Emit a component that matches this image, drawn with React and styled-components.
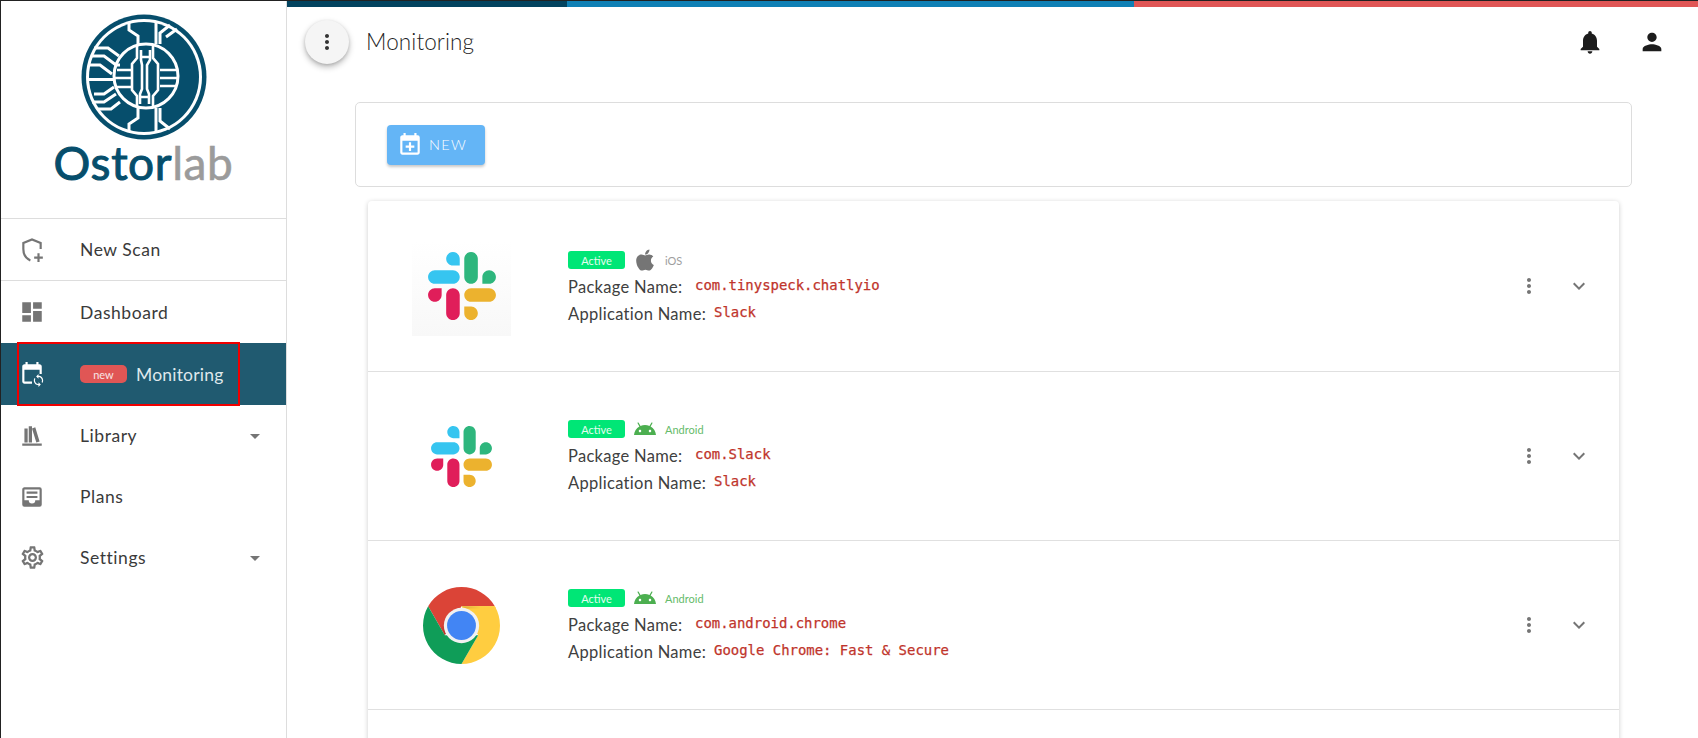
import React from "react";
import styled, { createGlobalStyle } from "styled-components";
import { FaApple } from "react-icons/fa";
import { MdOutlineSettings } from "react-icons/md";

const Global = createGlobalStyle`
  html, body { margin: 0; padding: 0; background: #fff; }
  body { font-family: "Lato", "Open Sans", sans-serif; color: #333; }
  * { box-sizing: border-box; }
`;

const Page = styled.div`
  display: flex;
  height: 738px;
  overflow: hidden;
  background: #fff;
  border-top: 1px solid #222;
`;

const Sidebar = styled.aside`
  flex: 0 0 287px;
  border-left: 1px solid #222;
  border-right: 1px solid #ddd;
  display: flex;
  flex-direction: column;
`;

const LogoBlock = styled.div`
  height: 218px;
  border-bottom: 1px solid #ddd;
  display: flex;
  flex-direction: column;
  align-items: center;
  padding-top: 13px;
`;

const LogoText = styled.div`
  font-family: "Lato", sans-serif;
  font-size: 46px;
  line-height: 40px;
  margin-top: 3px;
  font-weight: 400;
  color: #064e6c;
  letter-spacing: 0.6px;
  -webkit-text-stroke: 1px #064e6c;
  span { color: #9b9b9b; font-weight: 400; -webkit-text-stroke: 0.6px #9b9b9b; }
`;

const NavItem = styled.div`
  position: relative;
  height: ${(p) => p.$h}px;
  display: flex;
  align-items: center;
  padding-left: 19px;
  font-size: 17.5px;
  letter-spacing: ${(p) => (p.$active ? "0.2px" : "0.55px")};
  color: ${(p) => (p.$active ? "#dfe8ec" : "#3a3a3a")};
  background: ${(p) => (p.$active ? "#205a70" : "transparent")};
  border-bottom: ${(p) => (p.$line ? "1px solid #ddd" : "none")};
`;

const NavIcon = styled.svg`
  width: ${(p) => p.$s || 24}px;
  height: ${(p) => p.$s || 24}px;
  flex: none;
  margin-left: ${(p) => (p.$s ? (24 - p.$s) / 2 : 0)}px;
  margin-right: ${(p) => (p.$s ? 36 + (24 - p.$s) / 2 : 36)}px;
  fill: ${(p) => (p.$active ? "#fff" : "#757575")};
`;

const NewTag = styled.span`
  width: 47px;
  height: 18px;
  border-radius: 5px;
  background: #e05655;
  color: #f7e5e5;
  font-size: 11px;
  letter-spacing: 0;
  display: flex;
  align-items: center;
  justify-content: center;
  margin-right: 9px;
`;

const Highlight = styled.div`
  position: absolute;
  left: 16px;
  width: 223px;
  top: -1px;
  bottom: -1px;
  border: 2px solid #f00000;
  pointer-events: none;
`;

const Caret = styled.svg`
  width: 24px;
  height: 24px;
  fill: #757575;
  margin-left: auto;
  margin-right: 19px;
`;

const Main = styled.main`
  flex: 1;
  min-width: 0;
  display: flex;
  flex-direction: column;
`;

const Stripe = styled.div`
  display: flex;
  height: 6px;
  flex: 0 0 6px;
`;

const StripePart = styled.div`
  width: ${(p) => p.$w}px;
  flex: ${(p) => (p.$w ? "none" : "1")};
  background: ${(p) => p.$c};
`;

const Header = styled.header`
  flex: 0 0 70px;
  display: flex;
  align-items: center;
  padding: 0 0 0 18px;
`;

const Fab = styled.div`
  width: 44px;
  height: 44px;
  border-radius: 50%;
  background: #f5f5f5;
  display: flex;
  align-items: center;
  justify-content: center;
  box-shadow: 0 3px 6px rgba(0, 0, 0, 0.28), 0 1px 3px rgba(0, 0, 0, 0.12);
  margin-right: 17px;
`;

const Title = styled.h1`
  margin: 0;
  font-size: 22.5px;
  font-weight: 300;
  line-height: 28px;
  color: #1f1f1f;
  letter-spacing: 0.1px;
`;

const HeaderIcons = styled.div`
  margin-left: auto;
  display: flex;
  gap: 34px;
  padding-right: 32px;
`;

const Svg = styled.svg`
  width: ${(p) => p.$s || 24}px;
  height: ${(p) => p.$s || 24}px;
  fill: ${(p) => p.$c || "#757575"};
  flex: none;
  display: block;
`;

const Content = styled.div`
  flex: none;
  padding: 25px 66px 0 68px;
`;

const Toolbar = styled.section`
  height: 85px;
  border: 1px solid #ddd;
  border-radius: 5px;
  display: flex;
  align-items: center;
  padding: 0 0 0 31px;
`;

const NewButton = styled.button`
  width: 98px;
  height: 40px;
  border: 0;
  border-radius: 4px;
  background: #64b5f6;
  color: #fff;
  font-family: inherit;
  font-size: 14.5px;
  font-weight: 300;
  letter-spacing: 1.3px;
  display: flex;
  align-items: center;
  padding: 0 0 0 10px;
  gap: 6px;
  box-shadow: 0 2px 3px rgba(0, 0, 0, 0.22);
`;

const Card = styled.section`
  margin: 14px 13px 0 13px;
  border-radius: 4px;
  background: #fff;
  box-shadow: 0 1px 5px rgba(0, 0, 0, 0.2);
`;

const Row = styled.article`
  height: ${(p) => p.$h}px;
  display: flex;
  align-items: center;
  padding-right: 28px;
  border-bottom: 1px solid #e0e0e0;
`;

const LogoCell = styled.div`
  flex: 0 0 187px;
  margin-right: 13px;
  display: flex;
  align-items: center;
  justify-content: center;
  margin-top: ${(p) => p.$top || 0}px;
`;

const IconTile = styled.div`
  width: 99px;
  height: 95px;
  padding-bottom: 5px;
  display: flex;
  align-items: center;
  justify-content: center;
  background: linear-gradient(#ffffff, #f8f8f8);
`;

const Info = styled.div`
  flex: 1;
  align-self: flex-start;
  padding-top: ${(p) => p.$top}px;
  display: flex;
  flex-direction: column;
`;

const MetaLine = styled.div`
  height: 18px;
  display: flex;
  align-items: center;
  margin-bottom: 4px;
`;

const Active = styled.span`
  width: 57px;
  height: 18px;
  border-radius: 3px;
  background: #00e676;
  color: #e3fdf0;
  font-size: 11px;
  display: flex;
  align-items: center;
  justify-content: center;
  margin-right: 8px;
`;

const Platform = styled.span`
  font-size: 11px;
  margin-left: 8px;
  color: ${(p) => p.$c};
`;

const Field = styled.div`
  height: 27px;
  display: flex;
  align-items: center;
  font-size: 16.5px;
  font-weight: 400;
  color: #404040;
  letter-spacing: 0.3px;
`;

const FieldLabel = styled.span`
  flex: 0 0 ${(p) => p.$w}px;
  white-space: nowrap;
`;

const Code = styled.code`
  font-family: "DejaVu Sans Mono", "Liberation Mono", monospace;
  font-size: 13.95px;
  font-weight: 400;
  color: #c0342b;
  -webkit-text-stroke: 0.25px #c0342b;
  letter-spacing: 0;
  margin-bottom: 4px;
`;

const Actions = styled.div`
  display: flex;
  align-items: center;
  gap: 26px;
`;

const ic = {
  bell: "M12 22c1.1 0 2-.9 2-2h-4c0 1.1.89 2 2 2zm6-6v-5c0-3.07-1.64-5.64-4.5-6.32V4c0-.83-.67-1.5-1.5-1.5s-1.5.67-1.5 1.5v.68C7.63 5.36 6 7.92 6 11v5l-2 2v1h16v-1l-2-2z",
  person: "M12 12c2.21 0 4-1.79 4-4s-1.79-4-4-4-4 1.79-4 4 1.79 4 4 4zm0 2c-2.67 0-8 1.34-8 4v2h16v-2c0-2.66-5.33-4-8-4z",
  more: "M12 8c1.1 0 2-.9 2-2s-.9-2-2-2-2 .9-2 2 .9 2 2 2zm0 2c-1.1 0-2 .9-2 2s.9 2 2 2 2-.9 2-2-.9-2-2-2zm0 6c-1.1 0-2 .9-2 2s.9 2 2 2 2-.9 2-2-.9-2-2-2z",
  chevron: "M16.59 8.59L12 13.17 7.41 8.59 6 10l6 6 6-6z",
  dash: "M3 13h8V3H3v10zm0 8h8v-6H3v6zm10 0h8V11h-8v10zm0-18v6h8V3h-8z",
  caret: "M7 10l5 5 5-5z",
  shelf: "M9 3V18H12V3H9M12 5L16 18L19 17L15 4L12 5M5 5V18H8V5H5M3 19V21H21V19H3Z",
  inbox: "M19 15H15A3 3 0 0 1 12 18A3 3 0 0 1 9 15H5V5H19M19 3H5C3.89 3 3 3.9 3 5V19A2 2 0 0 0 5 21H19A2 2 0 0 0 21 19V5A2 2 0 0 0 19 3M17 7H7V9H17V7M17 11H7V13H17V11Z",
  calPlus: "M19 19V8H5V19H19M16 1H18V3H19A2 2 0 0 1 21 5V19C21 20.11 20.1 21 19 21H5C3.89 21 3 20.1 3 19V5C3 3.89 3.89 3 5 3H6V1H8V3H16V1M11 9.5H13V12.5H16V14.5H13V17.5H11V14.5H8V12.5H11V9.5Z",
  android: "M17.6 9.48l1.84-3.18c.16-.31.04-.69-.26-.85-.29-.15-.65-.06-.83.22l-1.88 3.24c-2.86-1.21-6.08-1.21-8.94 0L5.65 5.67c-.19-.29-.58-.38-.87-.2-.28.18-.37.54-.22.83L6.4 9.48C3.3 11.25 1.28 14.44 1 18h22c-.28-3.56-2.3-6.75-5.4-8.52zM7 15.25c-.69 0-1.25-.56-1.25-1.25s.56-1.25 1.25-1.25 1.25.56 1.25 1.25-.56 1.25-1.25 1.25zm10 0c-.69 0-1.25-.56-1.25-1.25s.56-1.25 1.25-1.25 1.25.56 1.25 1.25-.56 1.25-1.25 1.25z",
  sync: "M12 4V1L8 5l4 4V6c3.31 0 6 2.69 6 6 0 1.01-.25 1.97-.7 2.8l1.46 1.46C19.54 15.03 20 13.57 20 12c0-4.42-3.58-8-8-8zm0 14c-3.31 0-6-2.69-6-6 0-1.01.25-1.97.7-2.8L5.24 7.74C4.46 8.97 4 10.43 4 12c0 4.42 3.58 8 8 8v3l4-4-4-4v3z",
};

const Logo = () => (
  <svg width="126" height="126" viewBox="-63 -63 126 126" aria-hidden="true">
    <circle r="62.5" fill="#064e6c" />
    <circle r="58" fill="#fff" />
    <circle r="55" fill="#064e6c" />
    <g fill="none" stroke="#fff" strokeWidth="3" strokeLinejoin="miter">
      <circle cx="2" cy="-1" r="32" />
      <path d="M-7 -32V-19L-12 -13V13L-7 19V31M9 -32V-19L14 -13V13L9 19V31" strokeWidth="2.6" />
      <path d="M-3 -27V-17L-2 -12V12L-4 17V27M6 -27V-17L3 -12V12L5 17V27" strokeWidth="2.6" />
      <path d="M-3 -20H6M-4 20H5" strokeWidth="2.4" />
      <path d="M-27 -7H-13M-30 1H-13M-27 10H-13" strokeWidth="2.6" />
      <path d="M32 -7H16M34 1H16M32 9H16" strokeWidth="2.6" />
      <path d="M-56 2.5H-29" />
      <path d="M-52 -21H-40L-28 -12H-24M-50 -29H-36L-25 -21M-54 -12H-44L-32 -3" />
      <path d="M-50 17H-40L-30 10M-52 25H-40L-28 17M-46 32H-33L-24 25" />
      <path d="M12 -56V-33M-15 -54V-47L-6 -41V-33M26 -52L16 -44V-33M33 -48L22 -40" />
      <path d="M12 56V31M-15 54V47L-6 41V31M26 52L16 44V31" />
    </g>
  </svg>
);

const SlackLogo = ({ size }) => (
  <svg width={size} height={size} viewBox="0 0 2447.6 2452.5" aria-hidden="true">
    <path d="m897.4 0c-135.3.1-244.8 109.9-244.7 245.2-.1 135.3 109.5 245.1 244.8 245.2h244.8v-245.1c.1-135.3-109.5-245.1-244.9-245.3.1 0 .1 0 0 0m0 654h-652.6c-135.3.1-244.9 109.9-244.8 245.2-.2 135.3 109.4 245.1 244.7 245.3h652.7c135.3-.1 244.9-109.9 244.8-245.2.1-135.4-109.5-245.2-244.8-245.3z" fill="#36c5f0" />
    <path d="m2447.6 899.2c.1-135.3-109.5-245.1-244.8-245.2-135.3.1-244.9 109.9-244.8 245.2v245.3h244.8c135.3-.1 244.9-109.9 244.8-245.3zm-652.7 0v-654c.1-135.2-109.4-245-244.7-245.2-135.3.1-244.9 109.9-244.8 245.2v654c-.2 135.3 109.4 245.1 244.7 245.3 135.3-.1 244.9-109.9 244.8-245.3z" fill="#2eb67d" />
    <path d="m1550.1 2452.5c135.3-.1 244.9-109.9 244.8-245.2.1-135.3-109.5-245.1-244.8-245.2h-244.8v245.2c-.1 135.2 109.5 245 244.8 245.2zm0-654.1h652.7c135.3-.1 244.9-109.9 244.8-245.2.2-135.3-109.4-245.1-244.7-245.3h-652.7c-135.3.1-244.9 109.9-244.8 245.2-.1 135.4 109.4 245.2 244.7 245.3z" fill="#ecb22e" />
    <path d="m0 1553.2c-.1 135.3 109.5 245.1 244.8 245.2 135.3-.1 244.9-109.9 244.8-245.2v-245.2h-244.8c-135.3.1-244.9 109.9-244.8 245.2zm652.7 0v654c-.2 135.3 109.4 245.1 244.7 245.3 135.3-.1 244.9-109.9 244.8-245.2v-653.9c.2-135.3-109.4-245.1-244.7-245.3-135.4 0-244.9 109.8-244.8 245.1z" fill="#e01e5a" />
  </svg>
);

const ChromeLogo = () => (
  <svg width="77" height="77" viewBox="0 0 48 48" aria-hidden="true">
    <defs>
      <linearGradient id="chromeA" x1="26" y1="12" x2="36" y2="13" gradientUnits="userSpaceOnUse">
        <stop offset="0" stopColor="#e2ae3c" />
        <stop offset="1" stopColor="#ffcd40" />
      </linearGradient>
      <linearGradient id="chromeB" x1="15.800" y1="26" x2="11.500" y2="23.500" gradientUnits="userSpaceOnUse">
        <stop offset="0" stopColor="#8a2a20" stopOpacity="0.55" />
        <stop offset="1" stopColor="#8a2a20" stopOpacity="0" />
      </linearGradient>
    </defs>
    <path d="M3.22 12A24 24 0 0 1 44.78 12H24L13.6 30Z" fill="#db4437" />
    <path d="M13.6 30L20 18.900L13 15L8.200 21Z" fill="url(#chromeB)" />
    <path d="M44.78 12A24 24 0 0 1 24 48L34.4 30L24 12Z" fill="#ffcd40" />
    <path d="M24 12H44.78L45.5 13.4H27Z" fill="url(#chromeA)" />
    <path d="M24 48A24 24 0 0 1 3.22 12L13.6 30H34.4Z" fill="#0f9d58" />
    <circle cx="24" cy="24" r="11" fill="#f1f1f1" />
    <circle cx="24" cy="24" r="9" fill="#4285f4" />
  </svg>
);

const NavGlyph = ({ d, active, children, s }) => (
  <NavIcon viewBox="0 0 24 24" $active={active} $s={s}>
    {d && <path d={d} />}
    {children}
  </NavIcon>
);

const apps = [
  { h: 171, top: 50, pkg: "com.tinyspeck.chatlyio", name: "Slack", os: "iOS", logo: <IconTile><SlackLogo size={68} /></IconTile>, logoTop: 4 },
  { h: 169, top: 48, pkg: "com.Slack", name: "Slack", os: "Android", logo: <SlackLogo size={61} /> },
  { h: 169, top: 48, pkg: "com.android.chrome", name: "Google Chrome: Fast & Secure", os: "Android", logo: <ChromeLogo /> },
  { h: 169, top: 48, empty: true },
];

export default function App() {
  return (
    <Page>
      <Global />
      <Sidebar>
        <LogoBlock>
          <Logo />
          <LogoText>Ostor<span>lab</span></LogoText>
        </LogoBlock>
        <NavItem $h={62} $line>
          <NavGlyph s={26}>
            <path d="M10.5 21.6C6.6 20 4 15.900 4 11V5.600L12 2.200L20 5.600V11" fill="none" stroke="#757575" strokeWidth="2" />
            <path d="M17 15h2v3h3v2h-3v3h-2v-3h-3v-2h3z" />
          </NavGlyph>
          New Scan
        </NavItem>
        <NavItem $h={62}>
          <NavGlyph d={ic.dash} s={26} />
          Dashboard
        </NavItem>
        <NavItem $h={62} $active>
          <NavGlyph active s={26}>
            <path d="M19 3h-1V1h-2v2H8V1H6v2H5C3.900 3 3 3.900 3 5v14c0 1.100.9 2 2 2h7v-2H5V8h14v4h2V5c0-1.100-.9-2-2-2z" />
            <path d={ic.sync} transform="translate(11.500 11.500) scale(.54)" />
          </NavGlyph>
          <NewTag>new</NewTag>
          Monitoring
          <Highlight />
        </NavItem>
        <NavItem $h={61}>
          <NavGlyph d={ic.shelf} s={26} />
          Library
          <Caret viewBox="0 0 24 24"><path d={ic.caret} /></Caret>
        </NavItem>
        <NavItem $h={61}>
          <NavGlyph d={ic.inbox} s={26} />
          Plans
        </NavItem>
        <NavItem $h={61}>
          <NavIcon as={MdOutlineSettings} $s={27} />
          Settings
          <Caret viewBox="0 0 24 24"><path d={ic.caret} /></Caret>
        </NavItem>
      </Sidebar>
      <Main>
        <Stripe>
          <StripePart $w={280} $c="#03435f" />
          <StripePart $w={567} $c="#0f80b5" />
          <StripePart $c="#e05655" />
        </Stripe>
        <Header>
          <Fab><Svg viewBox="0 0 24 24" $c="#333"><path d={ic.more} /></Svg></Fab>
          <Title>Monitoring</Title>
          <HeaderIcons>
            <Svg viewBox="0 0 24 24" $s={28} $c="#1c1c1c"><path d={ic.bell} /></Svg>
            <Svg viewBox="0 0 24 24" $s={28} $c="#1c1c1c"><path d={ic.person} /></Svg>
          </HeaderIcons>
        </Header>
        <Content>
          <Toolbar>
            <NewButton>
              <Svg viewBox="0 0 24 24" $s={26} $c="#fff"><path d={ic.calPlus} /></Svg>
              NEW
            </NewButton>
          </Toolbar>
          <Card>
            {apps.map((a, i) => (
              <Row key={i} $h={a.h}>
                {!a.empty && (
                  <>
                    <LogoCell $top={a.logoTop}>{a.logo}</LogoCell>
                    <Info $top={a.top}>
                      <MetaLine>
                        <Active>Active</Active>
                        {a.os === "iOS" ? (
                          <Svg as={FaApple} $s={24} $c="#757575" />
                        ) : (
                          <Svg viewBox="0 0 24 24" $s={24} $c="#4caf50"><path d={ic.android} /></Svg>
                        )}
                        <Platform $c={a.os === "iOS" ? "#9e9e9e" : "#66bb6a"}>{a.os}</Platform>
                      </MetaLine>
                      <Field><FieldLabel $w={127}>Package Name:</FieldLabel><Code>{a.pkg}</Code></Field>
                      <Field><FieldLabel $w={146}>Application Name:</FieldLabel><Code>{a.name}</Code></Field>
                    </Info>
                    <Actions>
                      <Svg viewBox="0 0 24 24"><path d={ic.more} /></Svg>
                      <Svg viewBox="0 0 24 24"><path d={ic.chevron} /></Svg>
                    </Actions>
                  </>
                )}
              </Row>
            ))}
          </Card>
        </Content>
      </Main>
    </Page>
  );
}
